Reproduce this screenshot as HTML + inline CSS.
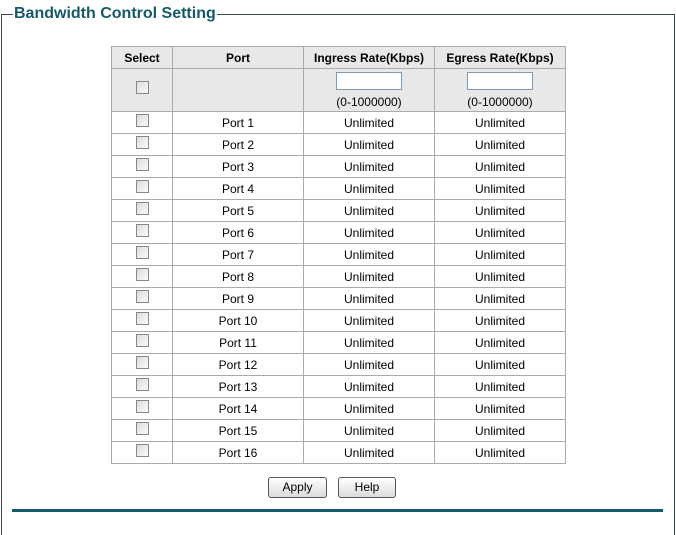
<!DOCTYPE html>
<html><head><style>
body{margin:0;width:676px;height:514px;background:#fff;font-family:"Liberation Sans",Arial,sans-serif;font-size:12px;color:#000;position:relative;overflow:hidden}
.fs{position:absolute;left:1px;top:14px;width:672px;height:520px;border:1px solid #3a4a50;border-bottom:none}
.title{position:absolute;left:13px;top:5px;background:#fff;padding:0 1px;font-weight:bold;font-size:16px;color:#145a6a}
table{position:absolute;left:111px;top:46px;border-collapse:collapse;table-layout:fixed}
td,th{border:1px solid #aaa;text-align:center;padding:0;height:21px;font-size:12px}
th{background:#e8e8e8;font-weight:bold}
tr.f td{background:#e8e8e8;height:42px}
.cb{display:inline-block;width:11px;height:11px;border:1px solid #888;background:linear-gradient(135deg,#ddd,#fafafa);vertical-align:middle;position:relative;top:-3px}
.in{display:block;margin:1px auto 0;width:64px;height:16px;border:1px solid #7a9cb8;background:#fff}
.btn{position:absolute;top:477px;height:19px;border:1px solid #556;border-radius:3px;background:linear-gradient(#fff,#dcdcdc);font-size:12px;text-align:center;line-height:19px}
.bl{position:absolute;left:12px;top:509px;width:651px;height:3px;background:#145a6a}
</style></head><body>
<div class="fs"></div>
<div class="title">Bandwidth Control Setting</div>
<table>
<colgroup><col style="width:61px"><col style="width:131px"><col style="width:131px"><col style="width:131px"></colgroup>
<tr><th>Select</th><th>Port</th><th>Ingress Rate(Kbps)</th><th>Egress Rate(Kbps)</th></tr>
<tr class="f"><td><span class="cb"></span></td><td></td><td><span class="in"></span><div style="margin-top:5px">(0-1000000)</div></td><td><span class="in"></span><div style="margin-top:5px">(0-1000000)</div></td></tr>
<tr><td><span class="cb"></span></td><td>Port 1</td><td>Unlimited</td><td>Unlimited</td></tr>
<tr><td><span class="cb"></span></td><td>Port 2</td><td>Unlimited</td><td>Unlimited</td></tr>
<tr><td><span class="cb"></span></td><td>Port 3</td><td>Unlimited</td><td>Unlimited</td></tr>
<tr><td><span class="cb"></span></td><td>Port 4</td><td>Unlimited</td><td>Unlimited</td></tr>
<tr><td><span class="cb"></span></td><td>Port 5</td><td>Unlimited</td><td>Unlimited</td></tr>
<tr><td><span class="cb"></span></td><td>Port 6</td><td>Unlimited</td><td>Unlimited</td></tr>
<tr><td><span class="cb"></span></td><td>Port 7</td><td>Unlimited</td><td>Unlimited</td></tr>
<tr><td><span class="cb"></span></td><td>Port 8</td><td>Unlimited</td><td>Unlimited</td></tr>
<tr><td><span class="cb"></span></td><td>Port 9</td><td>Unlimited</td><td>Unlimited</td></tr>
<tr><td><span class="cb"></span></td><td>Port 10</td><td>Unlimited</td><td>Unlimited</td></tr>
<tr><td><span class="cb"></span></td><td>Port 11</td><td>Unlimited</td><td>Unlimited</td></tr>
<tr><td><span class="cb"></span></td><td>Port 12</td><td>Unlimited</td><td>Unlimited</td></tr>
<tr><td><span class="cb"></span></td><td>Port 13</td><td>Unlimited</td><td>Unlimited</td></tr>
<tr><td><span class="cb"></span></td><td>Port 14</td><td>Unlimited</td><td>Unlimited</td></tr>
<tr><td><span class="cb"></span></td><td>Port 15</td><td>Unlimited</td><td>Unlimited</td></tr>
<tr><td><span class="cb"></span></td><td>Port 16</td><td>Unlimited</td><td>Unlimited</td></tr>
</table>
<div class="btn" style="left:268px;width:57px">Apply</div>
<div class="btn" style="left:338px;width:56px">Help</div>
<div class="bl"></div>
</body></html>
